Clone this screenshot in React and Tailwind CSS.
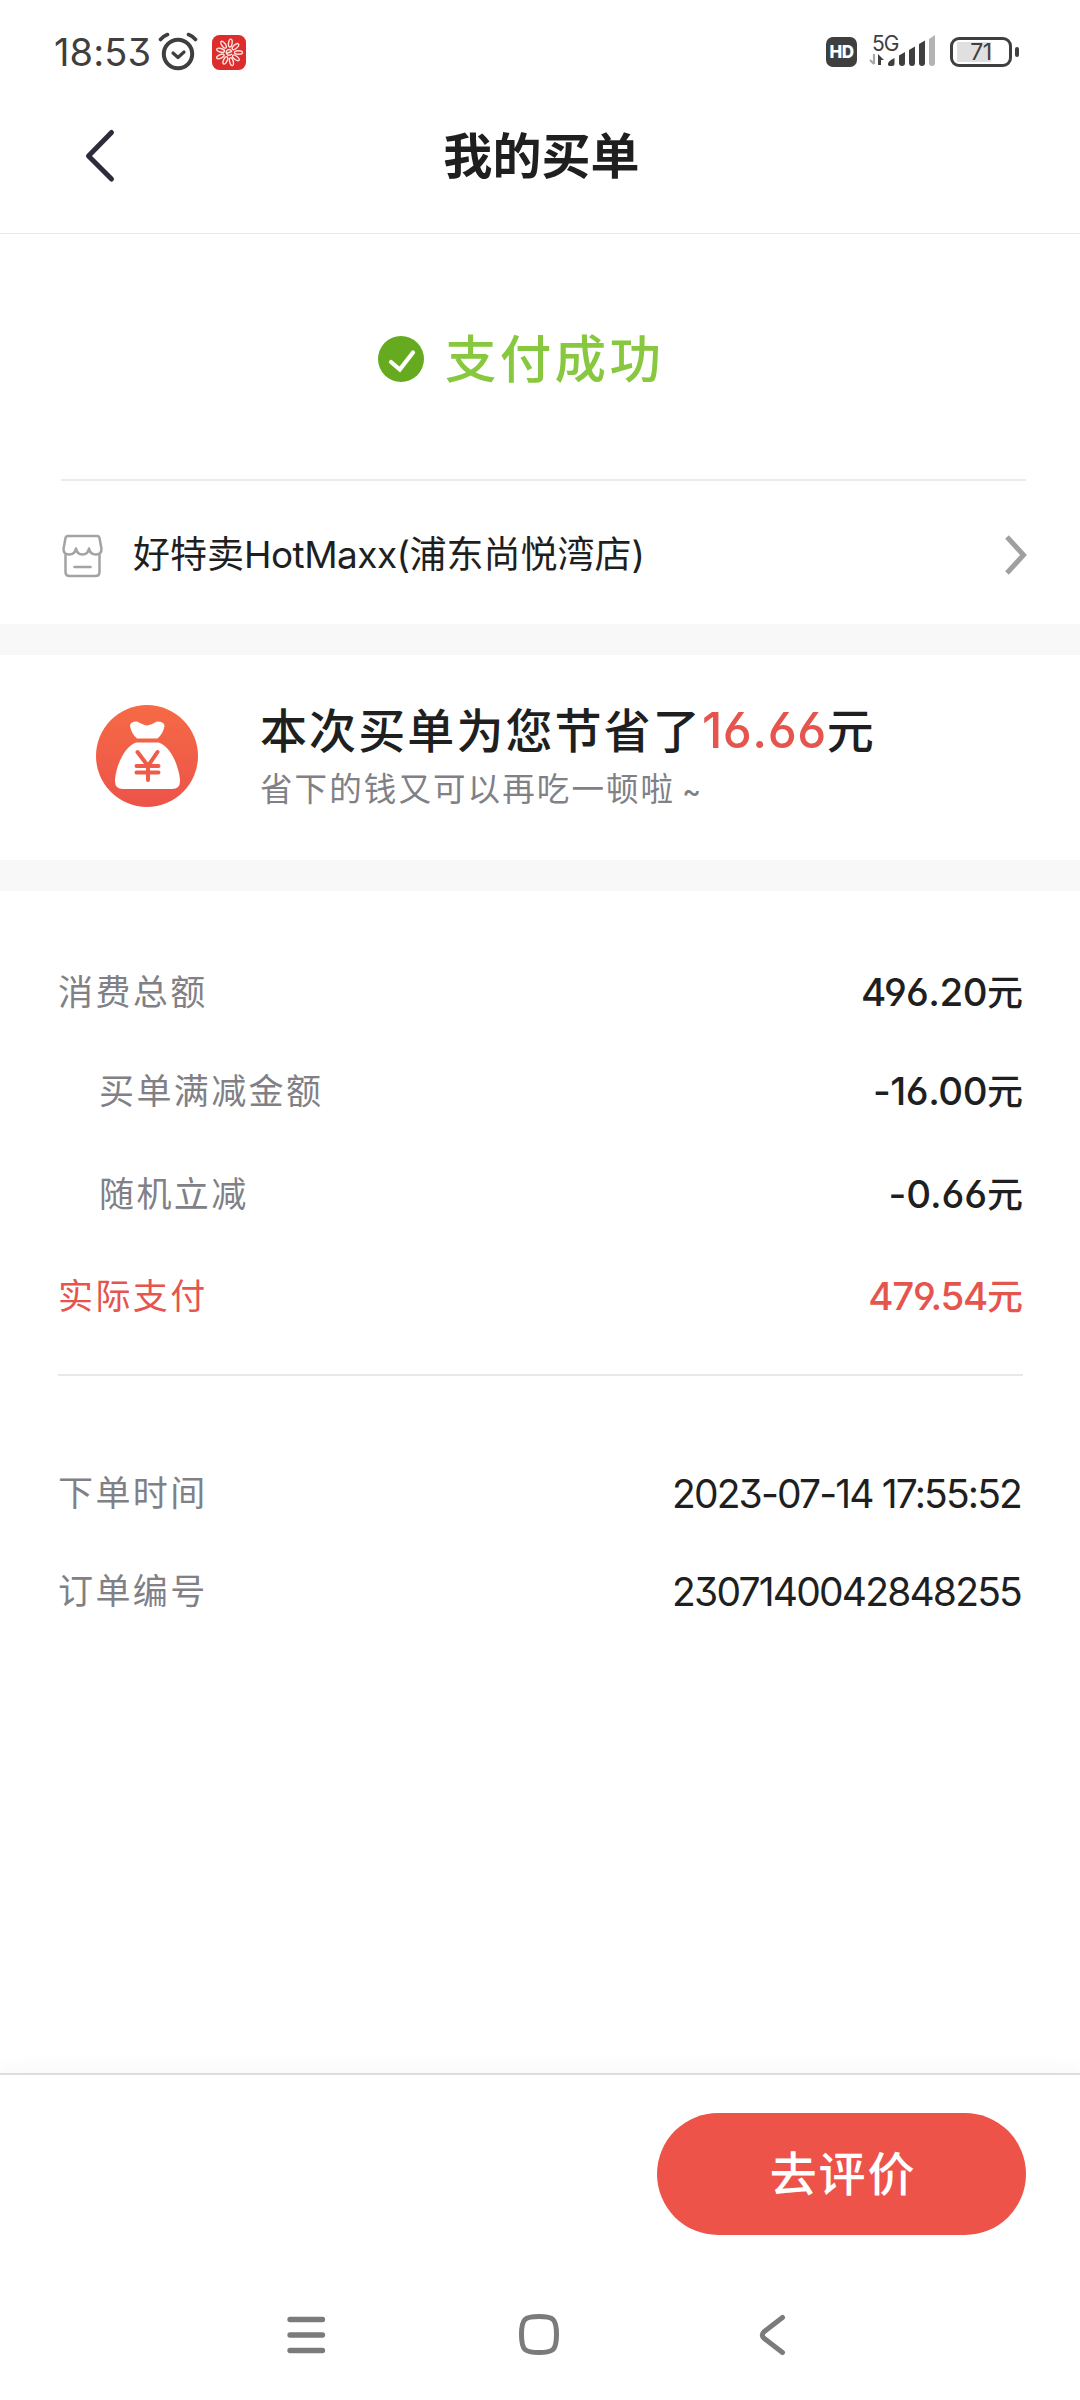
function StatusBar() {
  return (
    <div className="flex h-[104px] items-center pl-[54px] pr-[61px] text-[#3f3f40]">
      <span className="text-[38px] leading-[44px] tracking-[0.1px]">18:53</span>
      <svg className="ml-[7px] shrink-0" width="40" height="40" viewBox="0 0 40 40" fill="none" stroke="currentColor" strokeLinecap="round" strokeLinejoin="round">
        <circle cx="20" cy="22" r="14.2" strokeWidth="4" />
        <path d="M15 21 L20 25.5 L26 20" strokeWidth="3.2" />
        <path d="M2.5 7.5 Q5.500 4 9.500 2.500 M30.500 2.500 Q34.500 4 37.500 7.500" strokeWidth="3.600" />
      </svg>
      <svg className="ml-[14px] shrink-0" width="34" height="35" viewBox="0 0 34 35" fill="none">
        <rect width="34" height="35" rx="7.500" fill="#dd2c2c" />
        <g stroke="#ffe3de" strokeWidth="1.400">
          {[8, 48, 90, 128, 165, 205, 245, 285, 325].map((a, i) => (
            <ellipse key={a} cx="17" cy={i % 2 ? 8.800 : 8} rx="1.800" ry="4" transform={`rotate(${a} 17 17.500)`} />
          ))}
          <path d="M14.500 18.500 L19.500 16.500 Q18.500 13.500 15.500 15 Q13 17 15.500 19.800 Q17.500 21 20 19" />
        </g>
      </svg>
      <span className="ml-auto flex h-[30px] w-[31px] items-center justify-center rounded-[7px] bg-[#3f3f40] text-[17px] font-extrabold leading-none tracking-[-0.6px] text-white">HD</span>
      <div className="relative ml-[12px] h-[36px] w-[68px]">
        <span className="absolute left-[3px] top-0 text-[21px] leading-[20px] tracking-[-1px]">5G</span>
        <svg className="absolute left-0 top-0" width="68" height="36" viewBox="0 0 68 36" fill="currentColor">
          <path d="M5 20 V30 M5 30 L1 26" stroke="#a9a9a9" strokeWidth="2.200" fill="none" />
          <path d="M9 31 V20 L15 26 H12 V31 Z" />
          <path d="M19 31 Q18 27.500 25.500 24 V29.500 Q25.500 32 23 32 H20 Z" />
          <path d="M30 21.500 L36 18 V29 Q36 32 33 32 Q30 32 30 29 Z" />
          <path d="M40 16 L46 12.500 V29 Q46 32 43 32 Q40 32 40 29 Z" />
          <path d="M50 10 L56 6.500 V29 Q56 32 53 32 Q50 32 50 29 Z" />
          <path d="M60 5 L66 1 V29 Q66 32 63 32 Q60 32 60 29 Z" fill="#b3b3b3" />
        </svg>
      </div>
      <div className="ml-[13px] flex items-center">
        <div className="flex h-[30px] w-[62px] items-center justify-center rounded-[9px] border-[3px] border-[#3f3f40] bg-[linear-gradient(#e0e0e0,#e0e0e0)] bg-[length:34px_20px] bg-[position:4px_center] bg-no-repeat text-[23px] leading-none tracking-[-0.5px]">71</div>
        <div className="ml-[3px] h-[10px] w-[4px] rounded-[2px] bg-[#3f3f40]" />
      </div>
    </div>
  );
}

function Header() {
  return (
    <header className="flex h-[130px] items-center border-b border-[#e8e8e8] pb-[25px]">
      <svg className="ml-[80px]" width="40" height="60" viewBox="0 0 40 60" fill="none" stroke="#2e2b3d" strokeWidth="5" strokeLinecap="round" strokeLinejoin="round">
        <path d="M31.500 6.500 L8.500 30 L31.500 53" />
      </svg>
      <h1 className="mx-auto pr-[117px] pt-px text-[49px] font-bold leading-[60px] tracking-[0.1px] text-[#1f1f1f]">我的买单</h1>
    </header>
  );
}

function PaySuccess() {
  return (
    <section className="mx-[61px] mr-[54px] flex h-[247px] border-b-2 border-[#ebebeb] pl-[317px] pt-[92px]">
      <svg className="mt-[10px] shrink-0" width="46" height="46" viewBox="0 0 46 46" fill="none">
        <circle cx="23" cy="23" r="23" fill="#66ab1f" />
        <path d="M13 26 L21.800 33.500 L35 16.500" stroke="#fff" strokeWidth="4.200" strokeLinecap="round" />
      </svg>
      <span className="ml-[21px] text-[51.500px] font-medium leading-[66px] tracking-[3.300px] text-[#88c83e]">支付成功</span>
    </section>
  );
}

function ShopRow() {
  return (
    <section className="flex h-[143px] items-center pb-px pl-[62px] pr-[52px]">
      <svg className="mt-[7px] shrink-0" width="41" height="44" viewBox="0 0 41 44" fill="none" stroke="#a3a3a5" strokeWidth="2.500" strokeLinecap="round" strokeLinejoin="round">
        <path d="M6 2 H35 Q37 2 37.500 4 L39.500 15 Q39.500 20.500 34 20.500 Q28 20.500 27 14.500 Q26 20.500 20.500 20.500 Q15 20.500 14 14.500 Q13 20.500 7 20.500 Q1.500 20.500 1.500 15 L3.500 4 Q4 2 6 2 Z" />
        <path d="M3.500 21 V38 Q3.500 42 7.500 42 H33.500 Q37.500 42 37.500 38 V21 M12.500 33 H28.500" />
      </svg>
      <span className="ml-[30px] mt-[5px] whitespace-nowrap text-[37px] leading-[48px] text-[#1f1f1f]">
        好特卖<span className="tracking-[-0.550px]">HotMaxx(</span>浦东尚悦湾店)
      </span>
      <svg className="ml-auto mt-[6px] shrink-0" width="24" height="42" viewBox="0 0 24 42" fill="none" stroke="#a0a0a0" strokeWidth="5">
        <path d="M3 3 L19.500 21 L3 39" />
      </svg>
    </section>
  );
}

function Savings() {
  return (
    <section className="flex h-[205px] pl-[96px]">
      <svg className="mt-[50px] shrink-0" width="102" height="102" viewBox="0 0 102 102" fill="none">
        <defs>
          <linearGradient id="coin" x1="0" y1="0" x2="0" y2="1">
            <stop offset="0" stopColor="#f66a45" />
            <stop offset="1" stopColor="#ec5349" />
          </linearGradient>
        </defs>
        <circle cx="51" cy="51" r="51" fill="url(#coin)" />
        <path d="M34 21 Q34 16.500 41 16.500 Q47 20 51 20.500 Q55 20 61 16.500 Q68.500 16.500 68.500 21 Q67 29 61.500 33.500 H41 Q35.500 29 34 21 Z" fill="#fff" />
        <path d="M40 37.500 H62.500 C75 41 83 62 84 75 Q84.500 84 76 84 H27 Q18.500 84 19 75 C20 60 29 41 40 37.500 Z" fill="#fff" />
        <path d="M41.500 47 L52 61 L61.500 47 M52 61 V75 M40.500 61 H62.500 M40.500 67.500 H62.500" stroke="#ef5c49" strokeWidth="4" strokeLinecap="round" />
      </svg>
      <div className="ml-[62px] mt-[46px] whitespace-nowrap">
        <p className="text-[47px] font-medium leading-[60px] tracking-[2.100px] text-[#1f1f1f]">
          本次买单为您节省了<span className="text-[49px] tracking-[0.500px] text-[#e6544e]">16.66</span>元
        </p>
        <p className="mt-[5px] text-[32.500px] leading-[48px] tracking-[2.100px] text-[#808086]">
          省下的钱又可以再吃一顿啦<span className="ml-[7px] text-[28px] font-medium">~</span>
        </p>
      </div>
    </section>
  );
}

function Row({ label, value, className = "", valueClass = "" }) {
  return (
    <div className={`flex h-[60px] items-center justify-between text-[#808086] ${className}`}>
      <span className="pt-[2px] text-[35px] leading-[60px] tracking-[2.400px]">{label}</span>
      <span className={`leading-[60px] ${valueClass}`}>{value}</span>
    </div>
  );
}

function Amount({ digits, digitClass = "tracking-[-0.500px]" }) {
  return (
    <span className="flex items-baseline pt-[2px] text-[38.500px] font-medium leading-[60px]">
      <span className={digitClass}>{digits}</span>
      <span className="text-[36px]">元</span>
    </span>
  );
}

export default function App() {
  return (
    <div className="flex h-[2400px] w-[1080px] flex-col overflow-hidden bg-white font-['Inter','Noto_Sans_CJK_SC',sans-serif] [font-feature-settings:'cv03','cv04','cv06','cv09']">
      <StatusBar />
      <Header />
      <PaySuccess />
      <ShopRow />
      <div className="h-[31px] bg-[#f8f8f8]" />
      <Savings />
      <div className="h-[31px] bg-[#f8f8f8]" />
      <section className="mx-[58px] mr-[57px] flex h-[485px] flex-col border-b-2 border-[#e8e8e8] pt-[70px]">
        <Row label="消费总额" value={<Amount digits="496.20" />} valueClass="text-[#1f1f1f]" />
        <Row className="mt-[39px] pl-[41px]" label="买单满减金额" value={<Amount digits="-16.00" />} valueClass="text-[#1f1f1f]" />
        <Row className="mt-[43px] pl-[41px]" label="随机立减" value={<Amount digits="-0.66" digitClass="tracking-[-0.100px]" />} valueClass="text-[#1f1f1f]" />
        <Row className="mt-[42px] text-[#e6544e]" label="实际支付" value={<Amount digits="479.54" digitClass="tracking-[-1.300px]" />} />
      </section>
      <section className="mx-[58px] mr-[57px] pt-[86px]">
        <Row label="下单时间" value="2023-07-14 17:55:52" valueClass="pr-[2px] pt-[3px] text-[39px] tracking-[-1.850px] text-[#1f1f1f]" />
        <Row className="mt-[38px]" label="订单编号" value="2307140042848255" valueClass="pr-[2px] pt-[3px] text-[39px] tracking-[-1.800px] text-[#1f1f1f]" />
      </section>
      <footer className="mt-auto flex h-[189px] shrink-0 items-start justify-end border-t-2 border-[#dedede] pr-[54px] pt-[38px] shadow-[0_-2px_22px_rgba(0,0,0,0.045)]">
        <button className="h-[122px] w-[369px] rounded-full bg-[#ed5349] pl-[3px] text-[47px] font-medium leading-[118px] tracking-[1.800px] text-white">去评价</button>
      </footer>
      <nav className="h-[138px] shrink-0 bg-white">
        <div className="ml-[286px] flex w-[500px] items-center justify-between pt-[50px] text-[#7b7b7b]">
          <svg width="40" height="46" viewBox="0 0 40 46" fill="none" stroke="currentColor" strokeWidth="5.300" strokeLinecap="round">
            <path d="M4 7.500 H36.500 M4 23 H36.500 M4 38.500 H36.500" />
          </svg>
          <svg className="mr-[5px]" width="44" height="46" viewBox="0 0 44 46" fill="none" stroke="currentColor" strokeWidth="5">
            <path d="M22 4.500 C36 4.500 39.500 6.500 39.500 22.500 C39.500 38.500 36 40.500 22 40.500 C8 40.500 4.500 38.500 4.500 22.500 C4.500 6.500 8 4.500 22 4.500 Z" />
          </svg>
          <svg width="30" height="46" viewBox="0 0 30 46" fill="none" stroke="currentColor" strokeWidth="5" strokeLinecap="round" strokeLinejoin="round">
            <path d="M26.500 5.500 L8 19.800 Q4.500 23 8 26.200 L26.500 40.500" />
          </svg>
        </div>
      </nav>
    </div>
  );
}
